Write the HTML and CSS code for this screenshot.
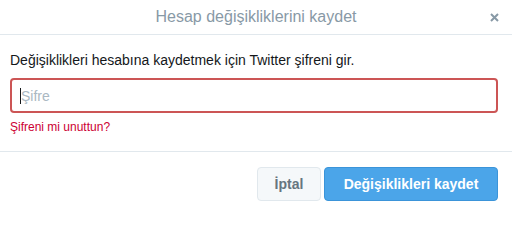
FILE: index.html
```html
<!DOCTYPE html>
<html lang="tr">
<head>
<meta charset="utf-8">
<link rel="stylesheet" href="styles.css">
</head>
<body>
<div class="modal">
  <div class="header">
    <h3 class="title">Hesap değişikliklerini kaydet</h3>
    <button class="close" aria-label="Kapat">
      <svg width="9" height="9" viewBox="0 0 9 9"><path d="M1 1L8 8M8 1L1 8" stroke="#8899a6" stroke-width="2"/></svg>
    </button>
  </div>
  <div class="body">
    <p class="intro">Değişiklikleri hesabına kaydetmek için Twitter şifreni gir.</p>
    <div class="field"><span class="caret"></span><span class="placeholder">Şifre</span></div>
    <a class="forgot" href="#">Şifreni mi unuttun?</a>
  </div>
  <div class="footer">
    <button class="btn btn-cancel">İptal</button>
    <button class="btn btn-primary">Değişiklikleri kaydet</button>
  </div>
</div>
</body>
</html>
```
FILE: styles.css
```css
html, body {
  margin: 0;
  padding: 0;
  background: #fff;
}
body {
  font-family: "Liberation Sans", Arial, sans-serif;
  color: #14171a;
}
.modal {
  width: 512px;
  height: 212px;
  display: flex;
  flex-direction: column;
}
.header {
  height: 34px;
  border-bottom: 1px solid #e1e8ed;
  display: flex;
  align-items: center;
  justify-content: center;
  position: relative;
}
.title {
  margin: 0;
  font-size: 16px;
  font-weight: normal;
  color: #8899a6;
  line-height: 20px;
}
.close {
  position: absolute;
  right: 13px;
  top: 13px;
  border: 0;
  background: none;
  padding: 0;
  width: 9px;
  height: 9px;
  display: flex;
}
.body {
  padding: 0 14px 0 10px;
  height: 116px;
  border-bottom: 1px solid #e1e8ed;
}
.intro {
  margin: 16px 0 9px;
  font-size: 14px;
  line-height: 18px;
}
.field {
  height: 31px;
  border: 2px solid #cc5555;
  border-radius: 4px;
  display: flex;
  align-items: center;
  padding-left: 8px;
}
.caret {
  width: 1px;
  height: 16px;
  background: #14171a;
}
.placeholder {
  font-size: 14px;
  color: #aab8c2;
}
.forgot {
  display: block;
  margin-top: 7px;
  font-size: 12px;
  line-height: 14px;
  color: #cc0033;
  text-decoration: none;
}
.footer {
  display: flex;
  justify-content: flex-end;
  gap: 3px;
  padding: 15px 14px 0 0;
}
.btn {
  height: 34px;
  border-radius: 4px;
  font-family: "Liberation Sans", Arial, sans-serif;
  font-size: 14px;
  font-weight: bold;
  padding: 0 16px;
}
.btn-cancel {
  width: 64px;
  background: #f5f8fa;
  border: 1px solid #e1e8ed;
  color: #66757f;
}
.btn-primary {
  width: 174px;
  background: #4ba5e9;
  border: 1px solid #3b94d9;
  color: #fff;
}
```
